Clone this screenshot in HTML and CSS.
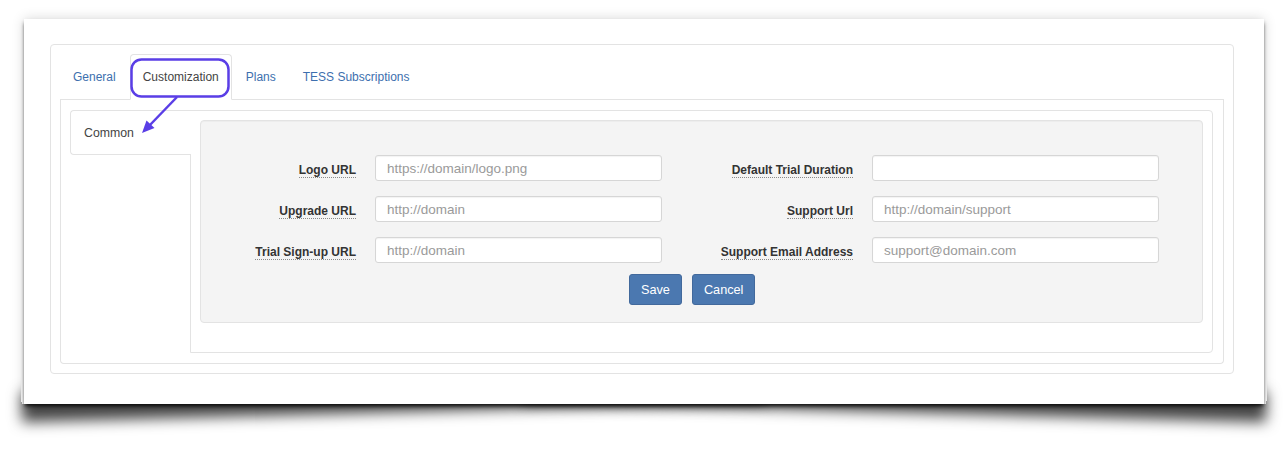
FILE: index.html
```html
<!DOCTYPE html>
<html lang="en">
<head>
    <meta charset="UTF-8" />
    <meta name="viewport" content="width=device-width, initial-scale=1" />
    <title>Customization</title>
    <link rel="stylesheet" href="styles.css">
</head>
<body>
    <div class="sheet">
        <div class="panel">
            <ul class="nav-tabs">
                <li><a href="#">General</a></li>
                <li class="active"><a href="#">Customization</a></li>
                <li><a href="#">Plans</a></li>
                <li><a href="#">TESS Subscriptions</a></li>
            </ul>
            <div class="tab-content">
                <div class="side-tabs">
                    <div class="side-tab active">Common</div>
                </div>
                <div class="side-pane">
                    <form class="well">
                        <div class="form-cols">
                            <div class="form-col">
                                <label for="logo"><span>Logo URL</span></label>
                                <input type="text" id="logo" placeholder="https://domain/logo.png" />

                                <label for="upgrade"><span>Upgrade URL</span></label>
                                <input type="text" id="upgrade" placeholder="http://domain" />

                                <label for="trial"><span>Trial Sign-up URL</span></label>
                                <input type="text" id="trial" placeholder="http://domain" />
                            </div>
                            <div class="form-col">
                                <label for="duration"><span>Default Trial Duration</span></label>
                                <input type="text" id="duration" />

                                <label for="support"><span>Support Url</span></label>
                                <input type="text" id="support" placeholder="http://domain/support" />

                                <label for="email"><span>Support Email Address</span></label>
                                <input type="text" id="email" placeholder="support@domain.com" />
                            </div>
                        </div>
                        <div class="actions">
                            <button type="button" class="btn">Save</button>
                            <button type="button" class="btn">Cancel</button>
                        </div>
                    </form>
                </div>
            </div>
        </div>
    </div>

    <!-- annotation callout -->
    <svg class="callout" width="1286" height="450" viewBox="0 0 1286 450">
        <rect x="131.5" y="59.5" width="97" height="37" rx="10" ry="10" fill="none" stroke="#5a3ee6" stroke-width="2.5" />
        <line x1="177" y1="97" x2="149" y2="126" stroke="#5a3ee6" stroke-width="2.5" />
        <polygon points="142,133 146.5,120.5 154.5,128" fill="#5a3ee6" />
    </svg>
</body>
</html>
```

FILE: styles.css
```css
body {
    font-family: "Liberation Sans", Arial, sans-serif;
    background: #fff;
    margin: 0;
    padding: 19px 0 0 24px;
    min-height: 450px;
    box-sizing: border-box;
    color: #333;
}

/* page with lifted corners */
.sheet {
    position: relative;
    width: 1240px;
    height: 385px;
    box-sizing: border-box;
    padding: 25px 30px 30px 26px;
    background: #fff;
    box-shadow: 0 0 12px rgba(0,0,0,0.16), 0 3px 4px -1px rgba(0,0,0,0.9);
}

.sheet::before,
.sheet::after {
    content: "";
    position: absolute;
    z-index: -1;
    bottom: 10px;
    width: 60%;
    height: 30px;
    box-shadow: 0 18px 14px rgba(0,0,0,0.72);
}

.sheet::before {
    left: -3px;
    transform: rotate(-1.6deg);
}

.sheet::after {
    right: -3px;
    transform: rotate(1.6deg);
}

.panel {
    height: 100%;
    box-sizing: border-box;
    border: 1px solid #e3e3e3;
    border-radius: 4px;
    padding: 9px;
    display: flex;
    flex-direction: column;
}

/* top tabs */
.nav-tabs {
    display: flex;
    list-style: none;
    margin: 0;
    padding: 0;
    height: 45px;
    border-bottom: 1px solid #e3e3e3;
}

.nav-tabs li {
    margin-right: 1px;
    margin-bottom: -1px;
}

.nav-tabs a {
    display: block;
    padding: 13px 12px;
    line-height: 18px;
    font-size: 12px;
    color: #3d6fae;
    text-decoration: none;
    border: 1px solid transparent;
    border-radius: 4px 4px 0 0;
}

.nav-tabs li.active a {
    color: #444;
    background: #fff;
    border-color: #e3e3e3 #e3e3e3 #fff;
}

.tab-content {
    flex: 1;
    display: flex;
    border: 1px solid #e3e3e3;
    border-top: none;
    border-radius: 0 0 4px 4px;
    padding: 10px 10px 10px 9px;
}

/* vertical tabs */
.side-tabs {
    width: 121px;
    flex-shrink: 0;
}

.side-tab {
    position: relative;
    z-index: 1;
    height: 45px;
    box-sizing: border-box;
    padding: 0 13px;
    display: flex;
    align-items: center;
    font-size: 12.3px;
    color: #444;
    background: #fff;
    border: 1px solid #e3e3e3;
    border-right: none;
    border-radius: 4px 0 0 4px;
}

.side-pane {
    flex: 1;
    margin-left: -1px;
    border: 1px solid #e3e3e3;
    border-radius: 0 4px 4px 0;
    padding: 9px 9px 28px;
}

.well {
    margin: 0;
    background: #f4f4f4;
    border: 1px solid #e3e3e3;
    border-radius: 4px;
    padding: 34px 19px 17px;
    box-shadow: inset 0 1px 1px rgba(0,0,0,0.03);
}

.form-cols {
    display: flex;
    gap: 55px;
}

.form-col {
    display: grid;
    grid-template-columns: 136px 287px;
    column-gap: 19px;
    row-gap: 15px;
}

.form-col label {
    text-align: right;
    font-size: 12px;
    font-weight: bold;
    line-height: 15px;
    padding-top: 8px;
    color: #333;
    white-space: nowrap;
}

.form-col label span {
    border-bottom: 1px dotted #8a8a8a;
}

.form-col input {
    height: 26px;
    box-sizing: border-box;
    padding: 0 11px;
    border: 1px solid #d6d6d6;
    border-radius: 3px;
    background: #fff;
    font-family: inherit;
    font-size: 13.5px;
    color: #555;
    box-shadow: inset 0 1px 1px rgba(0,0,0,0.05);
}

.form-col input::placeholder {
    color: #9a9a9a;
}

.actions {
    display: flex;
    gap: 10px;
    margin: 11px 0 0 409px;
}

.btn {
    height: 31px;
    padding: 0 11px;
    font-family: inherit;
    font-size: 12.7px;
    color: #fff;
    background: #4b78b0;
    border: 1px solid #42699c;
    border-radius: 3px;
    cursor: pointer;
}

.callout {
    position: absolute;
    z-index: 2;
    top: 0;
    left: 0;
    pointer-events: none;
}
```
